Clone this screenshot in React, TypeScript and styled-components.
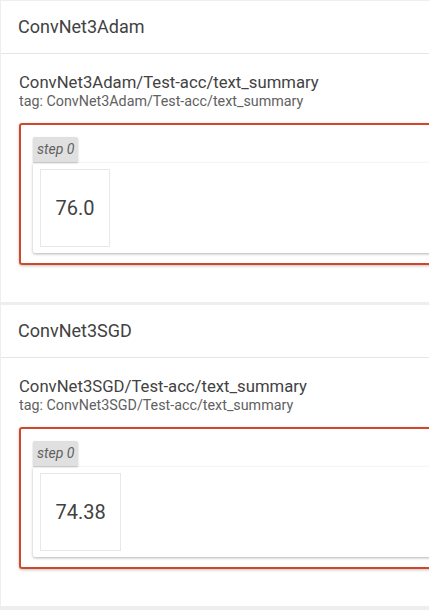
import styled, { createGlobalStyle } from 'styled-components'

const GlobalStyle = createGlobalStyle`
    html, body {
        margin: 0;
        padding: 0;
        background: #eeeeee;
        overflow: hidden;
    }
    body {
        font-family: Roboto, 'Noto Sans', sans-serif;
        color: #424242;
    }
`

type Summary = {
    run: string
    tag: string
    step: number
    value: string
}

const summaries: Summary[] = [
    { run: 'ConvNet3Adam', tag: 'ConvNet3Adam/Test-acc/text_summary', step: 0, value: '76.0' },
    { run: 'ConvNet3SGD', tag: 'ConvNet3SGD/Test-acc/text_summary', step: 0, value: '74.38' },
]

export default function App() {
    return (
        <>
            <GlobalStyle />
            <Page>
                {summaries.map(s => (
                    <RunCard key={s.run}>
                        <RunHeader>{s.run}</RunHeader>
                        <RunBody>
                            <TagTitle>{s.tag}</TagTitle>
                            <TagName>tag: {s.tag}</TagName>
                            <TextBox>
                                <StepChip>step {s.step}</StepChip>
                                <StepPanel>
                                    <ValueCell>{s.value}</ValueCell>
                                </StepPanel>
                            </TextBox>
                        </RunBody>
                    </RunCard>
                ))}
            </Page>
        </>
    )
}

const Page = styled.div`
    display: flex;
    flex-direction: column;
    gap: 3px;
    padding: 1px 0 0 1px;
    width: 760px;
`

const RunCard = styled.section`
    background: #ffffff;
`

const RunHeader = styled.h2`
    margin: 0;
    height: 53px;
    box-sizing: border-box;
    padding: 0 17px 1px;
    display: flex;
    align-items: center;
    font-size: 18px;
    font-weight: 400;
    line-height: 24px;
    border-bottom: 1px solid #e6e6e6;
`

const RunBody = styled.div`
    padding: 19px 18px 37px;
`

const TagTitle = styled.div`
    font-size: 16.7px;
    line-height: 20px;
`

const TagName = styled.div`
    font-size: 14.3px;
    line-height: 17px;
    color: #616161;
`

const TextBox = styled.div`
    margin-top: 13px;
    border: 2px solid #d2472a;
    border-radius: 3px;
    padding: 12px 12px 10px;
    box-shadow: 0 1px 3px rgba(0, 0, 0, 0.25);
`

const StepChip = styled.div`
    display: inline-block;
    background: #e0e0e0;
    color: #616161;
    font-size: 14px;
    font-style: italic;
    line-height: 19px;
    padding: 3px 4px;
    border-radius: 2px 2px 0 0;
    box-shadow: 0 1px 2px rgba(0, 0, 0, 0.25);
`

const StepPanel = styled.div`
    margin-top: 1px;
    background: #ffffff;
    padding: 6px 7px;
    border-radius: 2px;
    box-shadow: 0 1px 3px rgba(0, 0, 0, 0.3);
    display: flex;
`

const ValueCell = styled.div`
    border: 1px solid #e8e8e8;
    padding: 26px 14.5px;
    font-size: 20px;
    line-height: 24px;
    color: #424242;
`
